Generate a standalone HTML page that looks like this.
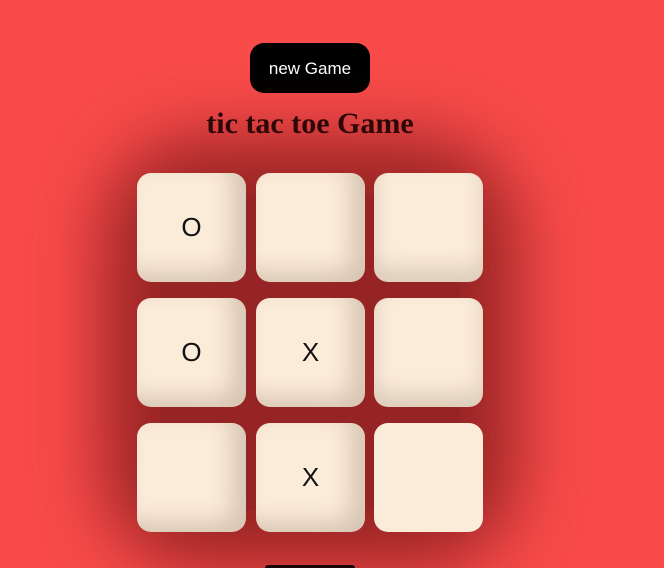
<!DOCTYPE html>
<html style="width:664px;height:568px;overflow:hidden"><head><meta charset="utf-8"><style>
html,body{margin:0;padding:0}
body{width:664px;height:568px;background:#f84b4a;position:relative;overflow:hidden;font-family:"Liberation Sans",sans-serif}
.btn{position:absolute;left:250px;top:43px;width:120px;height:50px;background:#000;border-radius:14px;color:#fff;font-size:17px;line-height:52px;text-align:center}
.btn2{position:absolute;left:265px;top:565px;width:90px;height:3px;background:#1a0505;border-radius:14px 14px 0 0}
h1{position:absolute;left:0;width:620px;text-align:center;top:107px;margin:0;font-family:"Liberation Serif",serif;font-size:30px;font-weight:bold;color:#1a0505}
.board{position:absolute;left:160px;top:195px;width:300px;height:315px;box-shadow:0 0 70px 55px rgba(110,20,20,.7);background:rgba(110,20,20,.7);border-radius:40px}
.c{position:absolute;width:109px;height:109px;border-radius:14px;background:#fbebd9;box-shadow:inset -14px -10px 22px rgba(90,70,50,.22);font-size:26px;color:#111;text-align:center;line-height:109px}
</style></head><body>
<div class="btn">new Game</div>
<h1>tic tac toe Game</h1>
<div class="board"></div>
<div class="c" style="left:137px;top:173px">O</div>
<div class="c" style="left:256px;top:173px"></div>
<div class="c" style="left:374px;top:173px;box-shadow:inset 0 -14px 20px rgba(90,70,50,.18)"></div>
<div class="c" style="left:137px;top:298px">O</div>
<div class="c" style="left:256px;top:298px">X</div>
<div class="c" style="left:374px;top:298px;box-shadow:inset 0 -14px 20px rgba(90,70,50,.18)"></div>
<div class="c" style="left:137px;top:423px"></div>
<div class="c" style="left:256px;top:423px">X</div>
<div class="c" style="left:374px;top:423px;box-shadow:none"></div>
<div class="btn2"></div>
</body></html>
